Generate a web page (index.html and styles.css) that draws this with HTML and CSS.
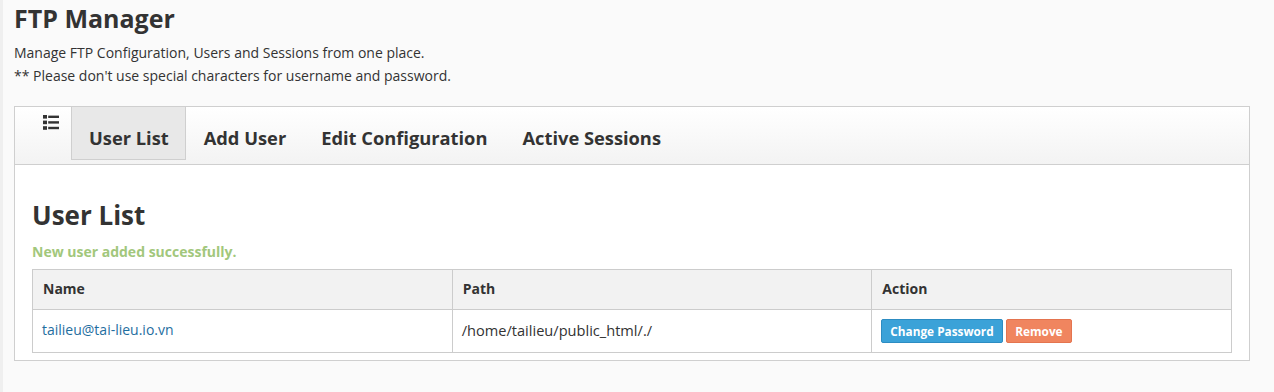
FILE: index.html
```html
<!DOCTYPE html>
<html lang="en">
<head>
<meta charset="utf-8">
<title>FTP Manager</title>
<link rel="stylesheet" href="styles.css">
</head>
<body>
<div class="page">
  <h1 class="title">FTP Manager</h1>
  <p class="desc">Manage FTP Configuration, Users and Sessions from one place.<br>** Please don't use special characters for username and password.</p>

  <div class="panel">
    <div class="panel-head">
      <span class="menu-icon">
        <svg width="16" height="15" viewBox="0 0 16 15" aria-hidden="true">
          <rect x="0" y="0" width="4" height="3.6" fill="#333"/>
          <rect x="0" y="5.6" width="4" height="3.6" fill="#333"/>
          <rect x="0" y="11.2" width="4" height="3.6" fill="#333"/>
          <rect x="5.2" y="0.6" width="10.8" height="2.4" fill="#333"/>
          <rect x="5.2" y="6.2" width="10.8" height="2.4" fill="#333"/>
          <rect x="5.2" y="11.8" width="10.8" height="2.4" fill="#333"/>
        </svg>
      </span>
      <a class="tab tab-active">User List</a>
      <a class="tab">Add User</a>
      <a class="tab">Edit Configuration</a>
      <a class="tab">Active Sessions</a>
    </div>
    <div class="panel-body">
      <h2 class="section-title">User List</h2>
      <p class="success">New user added successfully.</p>
      <table class="users">
        <colgroup>
          <col class="c-name">
          <col class="c-path">
          <col class="c-action">
        </colgroup>
        <thead>
          <tr><th>Name</th><th>Path</th><th>Action</th></tr>
        </thead>
        <tbody>
          <tr>
            <td><a class="user-link">tailieu@tai-lieu.io.vn</a></td>
            <td class="path">/home/tailieu/public_html/./</td>
            <td><button class="btn btn-blue">Change Password</button> <button class="btn btn-orange">Remove</button></td>
          </tr>
        </tbody>
      </table>
    </div>
  </div>
</div>
</body>
</html>
```

FILE: styles.css
```css
html, body {
  margin: 0;
  padding: 0;
}
body {
  background: #fafafa;
  font-family: "Open Sans", "DejaVu Sans", sans-serif;
  color: #333;
  border-left: 3px solid #efefef;
  min-height: 392px;
  box-sizing: border-box;
}
.page {
  padding: 3px 24px 0 11px;
}
.title {
  margin: 0;
  font-size: 25px;
  line-height: 30px;
  font-weight: 700;
  color: #333;
}
.desc {
  margin: 8px 0 0 0;
  font-size: 14px;
  line-height: 23px;
  color: #333;
}
.panel {
  margin-top: 19px;
  border: 1px solid #cfcfcf;
  background: #fff;
}
.panel-head {
  display: flex;
  align-items: flex-start;
  height: 57px;
  border-bottom: 1px solid #cfcfcf;
  background: linear-gradient(#ffffff, #f3f3f3);
}
.menu-icon {
  display: block;
  margin: 8px 12px 0 28px;
  height: 15px;
}
.menu-icon svg {
  display: block;
}
.tab {
  display: block;
  margin-top: -1px;
  padding: 19px 16px 9px 17px;
  border: 1px solid transparent;
  font-size: 18.3px;
  line-height: 24px;
  font-weight: 700;
  color: #333;
  cursor: pointer;
}
.tab-active {
  background: #e8e8e8;
  border-color: #cfcfcf;
}
.panel-body {
  padding: 34px 17px 7px 17px;
}
.section-title {
  margin: 0;
  font-size: 26px;
  line-height: 32px;
  font-weight: 700;
  color: #333;
}
.success {
  margin: 11px 0 0 0;
  font-size: 14px;
  line-height: 20px;
  font-weight: 700;
  color: #a2c77c;
}
.users {
  width: 100%;
  margin-top: 7px;
  border-collapse: collapse;
  table-layout: fixed;
  font-size: 14px;
  line-height: 20px;
}
.c-name, .c-path { width: 35%; }
.c-action { width: 30%; }
.users th, .users td {
  border: 1px solid #cccccc;
  text-align: left;
  vertical-align: top;
}
.users th {
  background: #f2f2f2;
  font-weight: 700;
  padding: 9px 10px 10px 10px;
}
.users td {
  padding: 9px 10px 9px 9px;
}
.users td.path {
  font-size: 14.6px;
  padding-top: 10px;
}
.user-link {
  display: inline-block;
  padding-top: 1px;
  color: #1f6e9f;
  cursor: pointer;
}
.btn {
  display: inline-block;
  height: 24px;
  margin: 0;
  padding: 0 8px;
  border: 1px solid;
  border-radius: 2px;
  font-family: "Open Sans", "DejaVu Sans", sans-serif;
  font-size: 11.8px;
  font-weight: 700;
  line-height: 22px;
  color: #fff;
  vertical-align: top;
  cursor: pointer;
}
.btn-blue {
  background: #3ba2d8;
  border-color: #2d8cc2;
}
.btn-orange {
  background: #f0855f;
  border-color: #e4744f;
}
```
